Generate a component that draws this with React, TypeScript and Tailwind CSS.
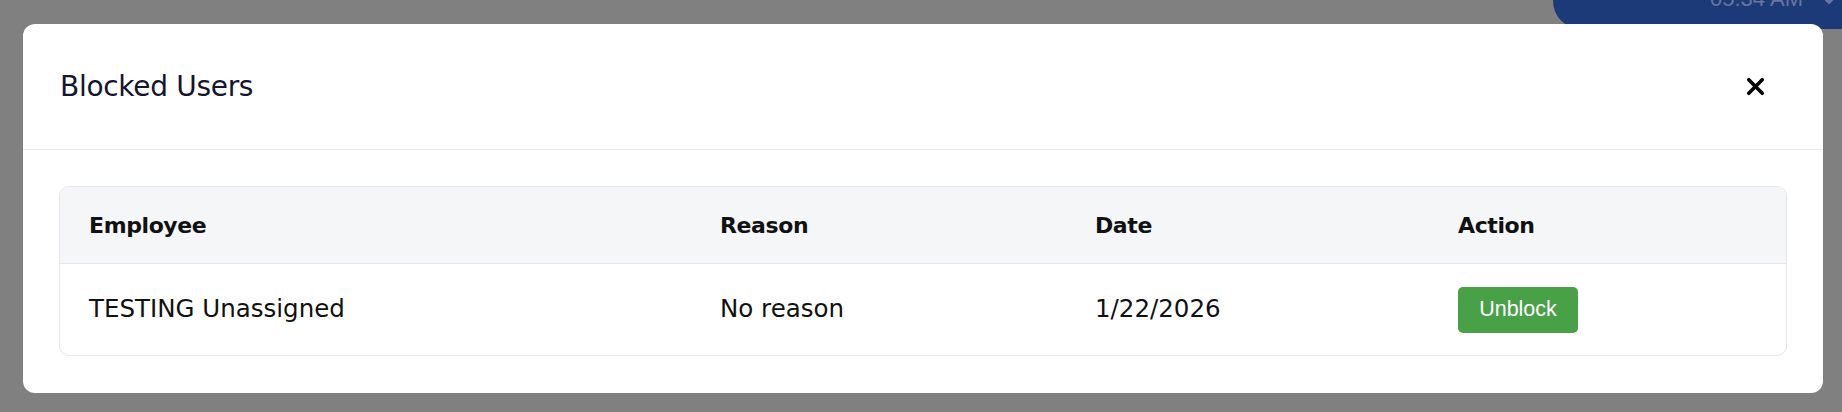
import { X } from 'lucide-react';

const COLS = 'grid grid-cols-[631px_375px_363px_1fr]';

const rows = [
  { employee: 'TESTING Unassigned', reason: 'No reason', date: '1/22/2026' },
];

const App = () => {
  return (
    <div className="relative w-[1842px] h-[412px] overflow-hidden bg-[#808080] font-['DejaVu_Sans',sans-serif]">
      {/* clock pill behind the overlay */}
      <div className="absolute top-0 right-0 h-[29px] w-[289px] rounded-bl-[28px] bg-[#1d3a78] overflow-hidden">
        <span className="absolute top-[-18px] left-[157px] text-[22px] text-[#6676a0] font-['Liberation_Sans',sans-serif]">
          05:34 AM
        </span>
        <span className="absolute top-[-10px] left-[270px] w-[12px] h-[12px] rotate-45 bg-[#6676a0]" />
      </div>

      <div className="relative z-10 ml-[23px] mt-[24px] w-[1800px] h-[369px] rounded-[12px] bg-white flex flex-col">
        {/* Header */}
        <div className="flex items-center justify-between h-[126px] border-b border-[#e8e9ec] pl-[37px] pr-[54px]">
          <h2 className="text-[28px] leading-none text-[#15152e] tracking-[-0.3px]">Blocked Users</h2>
          <button className="text-black">
            <X size={27} strokeWidth={3.2} absoluteStrokeWidth={false} />
          </button>
        </div>

        {/* Body */}
        <div className="px-[36px] pt-[36px]">
          <div className="rounded-[10px] border border-[#e6e7ea] overflow-hidden">
            <div className={`${COLS} h-[77px] items-center bg-[#f5f6f8] border-b border-[#e6e7ea] text-[22px] font-semibold text-[#111] tracking-[-0.4px]`}>
              <div className="pl-[29px]">Employee</div>
              <div className="pl-[29px]">Reason</div>
              <div className="pl-[29px]">Date</div>
              <div className="pl-[29px]">Action</div>
            </div>
            {rows.map((r) => (
              <div key={r.employee} className={`${COLS} h-[91px] items-center text-[24.5px] text-[#111]`}>
                <div className="pl-[29px]">{r.employee}</div>
                <div className="pl-[29px]">{r.reason}</div>
                <div className="pl-[29px]">{r.date}</div>
                <div className="pl-[29px]">
                  <button className="h-[46px] w-[120px] rounded-[5px] bg-[#48a047] text-white text-[21.5px] font-['Liberation_Sans',sans-serif]">
                    Unblock
                  </button>
                </div>
              </div>
            ))}
          </div>
        </div>
      </div>
    </div>
  );
};

export default App;
